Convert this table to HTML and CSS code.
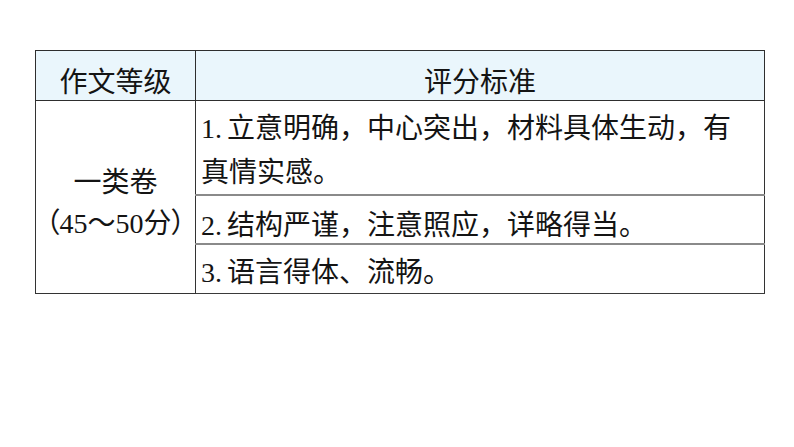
FILE: index.html
```html
<!DOCTYPE html>
<html lang="zh-CN">
<head>
<meta charset="utf-8">
<title>作文等级评分标准</title>
<link rel="stylesheet" href="styles.css">
</head>
<body>
<table class="grade-table">
  <colgroup>
    <col class="col-grade">
    <col class="col-criteria">
  </colgroup>
  <thead>
    <tr class="head-row">
      <th class="head-cell">作文等级</th>
      <th class="head-cell">评分标准</th>
    </tr>
  </thead>
  <tbody>
    <tr class="row-1">
      <td class="grade-cell" rowspan="3">一类卷<br><span class="nowrap"><span class="paren">（</span>45～50分<span class="paren">）</span></span></td>
      <td class="crit-cell"><span class="num">1.</span>立意明确，中心突出，材料具体生动，有<br>真情实感。</td>
    </tr>
    <tr class="row-2">
      <td class="crit-cell"><span class="num">2.</span>结构严谨，注意照应，详略得当。</td>
    </tr>
    <tr class="row-3">
      <td class="crit-cell"><span class="num">3.</span>语言得体、流畅。</td>
    </tr>
  </tbody>
</table>
</body>
</html>
```
FILE: styles.css
```css
html, body {
  margin: 0;
  padding: 0;
  background: #ffffff;
}

body {
  font-family: "Liberation Serif", "Noto Sans CJK SC", serif;
  font-size: 28px;
  color: #141414;
}

.grade-table {
  margin: 50px 0 0 35px;
  width: 729px;
  table-layout: fixed;
  border-collapse: collapse;
  border: 1.5px solid #3a3a3a;
}

.col-grade { width: 160px; }
.col-criteria { width: 569px; }

.head-row { height: 50px; }

.head-cell {
  font-family: "Noto Sans CJK SC", sans-serif;
  background: #eaf6fc;
  font-weight: normal;
  text-align: center;
  vertical-align: top;
  line-height: 34px;
  padding: 12px 0 0 0;
  border: 1.5px solid #2e2e2e;
}

.grade-cell {
  text-align: center;
  vertical-align: middle;
  line-height: 41px;
  padding: 12px 0 0 0;
  border: 1.5px solid #333333;
}

.nowrap { white-space: nowrap; }

.paren {
  font-feature-settings: "palt";
}

.num {
  font-family: "Liberation Serif", serif;
  line-height: 1;
  padding-right: 5px;
}

.crit-cell {
  font-family: "Noto Sans CJK SC", sans-serif;
  vertical-align: top;
  border-left: 1.5px solid #333333;
  border-right: 1.5px solid #333333;
  border-top: 2px solid #8a8a8a;
  border-bottom: 2px solid #8a8a8a;
  white-space: nowrap;
  padding-left: 5px;
}

.row-1 { height: 94px; }
.row-2 { height: 49px; }
.row-3 { height: 50px; }

.row-1 .crit-cell {
  border-top: 1.5px solid #2e2e2e;
  line-height: 44px;
  padding-top: 3px;
}
.row-2 .crit-cell {
  line-height: 36px;
  padding-top: 9px;
}
.row-3 .crit-cell {
  border-bottom: 1.5px solid #3a3a3a;
  line-height: 36px;
  padding-top: 7px;
}
```
